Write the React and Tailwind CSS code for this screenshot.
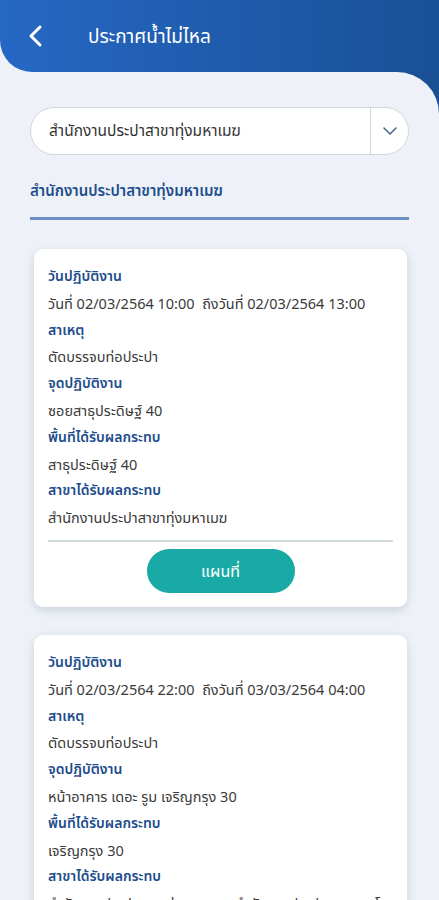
import React from "react";

const cards = [
  {
    date: "วันที่ 02/03/2564 10:00  ถึงวันที่ 02/03/2564 13:00",
    cause: "ตัดบรรจบท่อประปา",
    spot: "ซอยสาธุประดิษฐ์ 40",
    area: "สาธุประดิษฐ์ 40",
    branch: "สำนักงานประปาสาขาทุ่งมหาเมฆ",
  },
  {
    date: "วันที่ 02/03/2564 22:00  ถึงวันที่ 03/03/2564 04:00",
    cause: "ตัดบรรจบท่อประปา",
    spot: "หน้าอาคาร เดอะ รูม เจริญกรุง 30",
    area: "เจริญกรุง 30",
    branch: "สำนักงานประปาสาขาทุ่งมหาเมฆ, สำนักงานประปาสาขาพระโขนง",
  },
];

function Card({ c }) {
  const rows = [
    ["วันปฏิบัติงาน", c.date],
    ["สาเหตุ", c.cause],
    ["จุดปฏิบัติงาน", c.spot],
    ["พื้นที่ได้รับผลกระทบ", c.area],
    ["สาขาได้รับผลกระทบ", c.branch],
  ];
  return (
    <div className="ml-[34px] mr-[32px] rounded-[9px] bg-white px-[14px] pt-[14px] pb-[14px] shadow-[0_3px_10px_rgba(40,60,90,0.18)]">
      {rows.map(([l, v]) => (
        <div key={l}>
          <div className="text-[14px] leading-[26.8px] font-semibold text-[#1d4d8c]">{l}</div>
          <div className="text-[14.5px] leading-[26.8px] text-[#3a3a3a] whitespace-pre overflow-hidden">{v}</div>
        </div>
      ))}
      <div className="mt-[9px] h-[2px] bg-[#cfdadc]" />
      <div className="mt-[7px] flex justify-center">
        <button className="h-[44px] w-[148px] rounded-full bg-[#1aaaa6] text-[16px] text-white">แผนที่</button>
      </div>
    </div>
  );
}

export default function App() {
  return (
    <div
      className="h-[900px] overflow-hidden bg-[#eef2f8]"
      style={{ fontFamily: '"Noto Sans", "Noto Sans Thai", Tahoma, sans-serif' }}
    >
      <div className="flex h-[72px] items-center rounded-bl-[32px] bg-gradient-to-r from-[#2568c4] to-[#1a5096] pl-[26px]">
        <svg width="20" height="24" viewBox="0 0 20 24" fill="none">
          <path d="M14 3 L5 12 L14 21" stroke="white" strokeWidth="3" strokeLinecap="round" strokeLinejoin="round" />
        </svg>
        <span className="ml-[42px] text-[19px] text-white">ประกาศน้ำไม่ไหล</span>
      </div>
      <div className="bg-[#1a5096]">
        <div className="rounded-tr-[42px] bg-[#eef2f8] pt-[35px]">
          <div className="mx-[30px] flex h-[48px] items-center rounded-full border border-[#d2d6dc] bg-white">
            <span className="flex-1 pl-[18px] text-[15.5px] text-[#333]">สำนักงานประปาสาขาทุ่งมหาเมฆ</span>
            <div className="flex h-full w-[38px] items-center justify-center border-l border-[#d2d6dc]">
              <svg width="16" height="10" viewBox="0 0 16 10" fill="none">
                <path d="M2 2 L8 8 L14 2" stroke="#4a6a8a" strokeWidth="1.6" strokeLinecap="round" strokeLinejoin="round" />
              </svg>
            </div>
          </div>
          <div className="mx-[30px] mt-[21px] text-[15px] leading-[28px] font-semibold text-[#1d4d8c]">สำนักงานประปาสาขาทุ่งมหาเมฆ</div>
          <div className="mx-[30px] mt-[13px] h-[3px] bg-[#6a90c2]" />
          <div className="mt-[29px] flex flex-col gap-[28px]">
            {cards.map((c, i) => (
              <Card key={i} c={c} />
            ))}
          </div>
        </div>
      </div>
    </div>
  );
}
